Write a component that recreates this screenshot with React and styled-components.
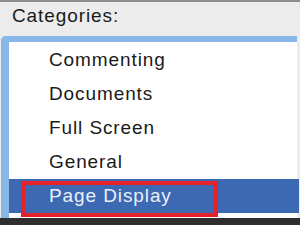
import React from "react";
import styled, { createGlobalStyle } from "styled-components";

const Global = createGlobalStyle`
  html, body { margin: 0; padding: 0; background: #ececec; }
  body { font-family: "Liberation Sans", Arial, sans-serif; }
`;

const Panel = styled.div`
  width: 300px;
  height: 225px;
  box-sizing: border-box;
  overflow: hidden;
  background: #ececec;
  border-top: 2px solid #8e8e8e;
  display: flex;
  flex-direction: column;
`;

const Label = styled.div`
  height: 34px;
  flex: none;
  padding-left: 12px;
  line-height: 28px;
  font-size: 19px;
  letter-spacing: 0.9px;
  color: #1a1a1a;
`;

const ListBox = styled.div`
  flex: 1;
  margin-left: 1px;
  margin-right: 3px;
  border-top: 6px solid #89b8e8;
  border-left: 8px solid #89b8e8;
  border-top-left-radius: 5px;
  background: #ffffff;
  padding-top: 1px;
  display: flex;
  flex-direction: column;
`;

const Row = styled.div`
  position: relative;
  height: 34px;
  flex: none;
  padding-left: 40px;
  line-height: 34px;
  font-size: 19px;
  letter-spacing: 0.9px;
  color: ${(p) => (p.$selected ? "#eaf0fa" : "#1a1a1a")};
  background: ${(p) => (p.$selected ? "#3d68b2" : "transparent")};
  margin-right: ${(p) => (p.$selected ? "-2px" : "0")};
`;

const Highlight = styled.div`
  position: absolute;
  left: 12px;
  top: 2px;
  width: 197px;
  height: 36px;
  box-sizing: border-box;
  border: 4px solid #e5212a;
  pointer-events: none;
`;

const BottomBar = styled.div`
  height: 7px;
  flex: none;
  background: #2e2e2e;
`;

const items = ["Commenting", "Documents", "Full Screen", "General", "Page Display"];

export default function App() {
  return (
    <>
      <Global />
      <Panel>
        <Label>Categories:</Label>
        <ListBox>
          {items.map((it) => {
            const sel = it === "Page Display";
            return (
              <Row key={it} $selected={sel}>
                {it}
                {sel && <Highlight />}
              </Row>
            );
          })}
        </ListBox>
        <BottomBar />
      </Panel>
    </>
  );
}
